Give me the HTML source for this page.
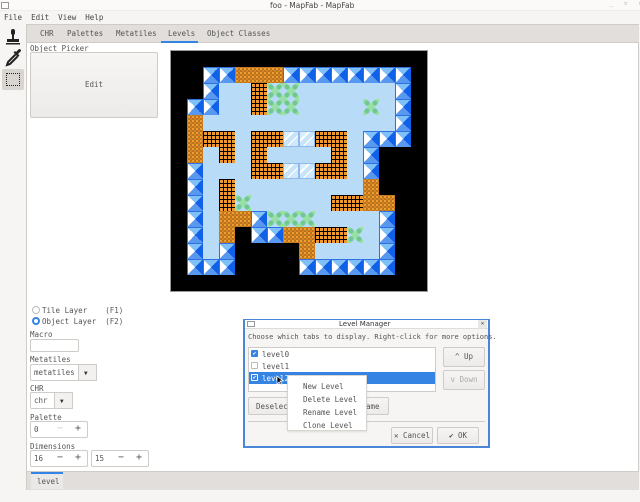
<!DOCTYPE html>
<html><head><meta charset="utf-8"><style>
*{box-sizing:border-box;margin:0;padding:0}
body{width:640px;height:502px;background:#f6f5f4;font-family:"DejaVu Sans Mono","Liberation Mono",monospace;font-size:7.5px;color:#555;position:relative;overflow:hidden}
.a{position:absolute}
.t{white-space:nowrap}
.map{left:171px;top:51px;width:256px;height:240px;background:#000;outline:1px solid #999}
.map div{position:absolute;width:16px;height:16px}
.B{background:conic-gradient(from -45deg,#80c0f8 0 25%,#1060e8 25% 50%,#5898f0 50% 75%,#fff 75%);box-shadow:inset 1px 1px 0 #3070e0}
.L{background:#b8dcf8}
.R{background:radial-gradient(circle,#f0a030 1.3px,transparent 1.8px) 0 0/4px 4px,radial-gradient(circle,#d88020 1.3px,transparent 1.8px) 2px 2px/4px 4px,#2a1400}
.W{background:linear-gradient(#000 1px,transparent 1px) 0 0/16px 4px,linear-gradient(90deg,#000 1px,transparent 1px) 0 0/8px 8px,linear-gradient(90deg,#000 1px,transparent 1px) 4px 4px/8px 8px,#f09830}
.G{background:radial-gradient(circle,#70c890 2px,transparent 3px) 0 0/8px 8px,linear-gradient(45deg,transparent 40%,#98e0a8 40% 60%,transparent 60%),linear-gradient(-45deg,#b8dcf8 40%,#98e0a8 40% 60%,#b8dcf8 60%)}
.S{background:linear-gradient(135deg,#d8eefc 30%,#fff 30% 38%,#c8e4fa 38% 58%,#fff 58% 64%,#d0e8fc 64%);box-shadow:inset 0 0 0 1px #90b8e8}
.btn{border:1px solid #cfcbc7;border-radius:2px;background:linear-gradient(#f6f5f4,#edebe9);text-align:center}
.inp{border:1px solid #cfcbc7;border-radius:2px;background:#fff}
</style></head><body>
<div class="a" style="left:0;top:0;width:640px;height:11px;background:#fbfaf9;border-bottom:1px solid #eee"></div>
<div class="a" style="left:1px;top:2px;width:8px;height:7px;border:1px solid #999;background:#fff"></div>
<div class="a t" style="left:270px;top:1px;font-family:'DejaVu Sans',sans-serif;font-size:7.5px;color:#444">foo - MapFab - MapFab</div>
<div class="a" style="left:606px;top:0;width:33px;height:10px;color:#aaa;font-size:6px">&nbsp;_&nbsp;&nbsp;&nbsp;▫&nbsp;&nbsp;&nbsp;✕</div>
<div class="a t" style="left:4px;top:13px;color:#444;font-size:7.5px">File&nbsp;&nbsp;Edit&nbsp;&nbsp;View&nbsp;&nbsp;Help</div>
<svg class="a" style="left:4px;top:28px" width="18" height="40" viewBox="0 0 18 40">
<rect x="7" y="1" width="4" height="6" rx="2" fill="#222"/><rect x="8" y="6" width="2" height="6" fill="#222"/><rect x="3" y="11" width="12" height="3" fill="#222"/><rect x="2" y="15" width="14" height="1.5" fill="#222"/>
<path d="M11.5 26.5 L4 34 L3 37 L6 36 L13.5 28.5" stroke="#222" stroke-width="2" fill="none"/>
<path d="M12 24 L15 21 Q17 21 17 23 L14 26 L15.5 27.5 L14 29 L9.5 24.5 L11 23z" fill="#222"/>
</svg>
<div class="a" style="left:2px;top:69px;width:22px;height:21px;background:#d8d4d0;border-radius:2px"></div>
<div class="a" style="left:6px;top:73px;width:14px;height:13px;border:1.5px dotted #222"></div>
<div class="a" style="left:26px;top:24px;width:613px;height:466px;background:#fff;border:1px solid #cfcbc7"></div>
<div class="a" style="left:27px;top:25px;width:612px;height:18px;background:#e1dedb;border-bottom:1px solid #cfcbc7"></div>
<div class="a t" style="left:40px;top:29px">CHR</div>
<div class="a t" style="left:67px;top:29px">Palettes</div>
<div class="a t" style="left:116px;top:29px">Metatiles</div>
<div class="a t" style="left:168px;top:29px">Levels</div>
<div class="a t" style="left:207px;top:29px">Object Classes</div>
<div class="a" style="left:161px;top:41px;width:37px;height:2px;background:#3584e4"></div>
<div class="a t" style="left:30px;top:44px">Object Picker</div>
<div class="a btn" style="left:30px;top:52px;width:128px;height:66px;line-height:64px">Edit</div>
<div class="a map" id="map"></div>
<div class="a" style="left:32px;top:306px;width:8px;height:8px;border:1px solid #bbb;border-radius:50%"></div>
<div class="a t" style="left:42px;top:306px">Tile Layer&nbsp;&nbsp;&nbsp;&nbsp;(F1)</div>
<div class="a" style="left:32px;top:317px;width:8px;height:8px;border:2.5px solid #3584e4;border-radius:50%"></div>
<div class="a t" style="left:42px;top:317px">Object Layer&nbsp;&nbsp;(F2)</div>
<div class="a t" style="left:30px;top:330px">Macro</div>
<div class="a inp" style="left:30px;top:339px;width:49px;height:13px"></div>
<div class="a t" style="left:30px;top:355px">Metatiles</div>
<div class="a inp" style="left:30px;top:364px;width:67px;height:17px"></div>
<div class="a" style="left:78px;top:364px;width:19px;height:17px;border:1px solid #cfcbc7;background:#f2f1f0"></div>
<div class="a t" style="left:34px;top:368px">metatiles</div><div class="a" style="left:84px;top:370px;font-size:6px;color:#333">▼</div>
<div class="a t" style="left:30px;top:384px">CHR</div>
<div class="a inp" style="left:30px;top:392px;width:43px;height:17px"></div>
<div class="a" style="left:54px;top:392px;width:19px;height:17px;border:1px solid #cfcbc7;background:#f2f1f0"></div>
<div class="a t" style="left:34px;top:396px">chr</div><div class="a" style="left:60px;top:398px;font-size:6px;color:#333">▼</div>
<div class="a t" style="left:30px;top:413px">Palette</div>
<div class="a inp" style="left:30px;top:421px;width:58px;height:17px"></div>
<div class="a t" style="left:34px;top:425px">0</div><div class="a t" style="left:57px;top:423px;font-size:10px;color:#ccc">−</div><div class="a t" style="left:75px;top:423px;font-size:10px;color:#555">+</div>
<div class="a t" style="left:30px;top:442px">Dimensions</div>
<div class="a inp" style="left:30px;top:450px;width:58px;height:17px"></div>
<div class="a t" style="left:34px;top:454px">16</div><div class="a t" style="left:57px;top:452px;font-size:10px">−</div><div class="a t" style="left:75px;top:452px;font-size:10px">+</div>
<div class="a inp" style="left:91px;top:450px;width:58px;height:17px"></div>
<div class="a t" style="left:95px;top:454px">15</div><div class="a t" style="left:118px;top:452px;font-size:10px">−</div><div class="a t" style="left:136px;top:452px;font-size:10px">+</div>
<div class="a" style="left:27px;top:471px;width:612px;height:19px;background:#e1dedb;border-top:1px solid #cfcbc7"></div>
<div class="a" style="left:31px;top:472px;width:32px;height:17px;background:#ebe9e7;border-top:2px solid #3584e4"></div>
<div class="a t" style="left:37px;top:477px">level</div>
<div class="a" style="left:243px;top:319px;width:247px;height:129px;background:#f6f5f4;border:2px solid #4a86d8"></div>
<div class="a" style="left:245px;top:320px;width:243px;height:9px;background:#fff;border-bottom:1px solid #ddd"></div>
<div class="a" style="left:247px;top:321px;width:8px;height:6px;border:1px solid #999"></div>
<div class="a t" style="left:339px;top:320px;font-family:'DejaVu Sans',sans-serif;font-size:7px;color:#333">Level Manager</div>
<div class="a" style="left:478px;top:320px;width:9px;height:8px;background:#e8e8e8;font-size:6px;text-align:center;color:#444">✕</div>
<div class="a t" style="left:248px;top:333px;font-size:7px">Choose which tabs to display. Right-click for more options.</div>
<div class="a" style="left:248px;top:347px;width:188px;height:45px;background:#fff;border:1px solid #cfcbc7"></div>
<div class="a" style="left:249px;top:372px;width:186px;height:12px;background:#3584e4"></div>
<div class="a" style="left:251px;top:350px;width:7px;height:7px;background:#3584e4;border-radius:1px;color:#fff;font-size:6px;line-height:7px;text-align:center">✔</div>
<div class="a t" style="left:262px;top:350px">level0</div>
<div class="a" style="left:251px;top:362px;width:7px;height:7px;border:1px solid #bbb;border-radius:1px"></div>
<div class="a t" style="left:262px;top:362px">level1</div>
<div class="a" style="left:251px;top:374px;width:7px;height:7px;background:#3584e4;border:1px solid #fff;border-radius:1px;color:#fff;font-size:6px;line-height:6px;text-align:center">✔</div>
<div class="a t" style="left:262px;top:374px;color:#fff">level2</div>
<div class="a btn t" style="left:443px;top:347px;width:42px;height:20px;line-height:18px">^ Up</div>
<div class="a btn t" style="left:443px;top:370px;width:42px;height:20px;line-height:18px;color:#aaa">v Down</div>
<div class="a btn" style="left:248px;top:397px;width:141px;height:18px"></div>
<div class="a t" style="left:256px;top:402px">Deselect</div>
<div class="a t" style="left:366px;top:402px">ame</div>
<div class="a" style="left:248px;top:421px;width:237px;height:1px;background:#cfcbc7"></div>
<div class="a btn t" style="left:391px;top:427px;width:42px;height:17px;line-height:15px">✕ Cancel</div>
<div class="a btn t" style="left:437px;top:427px;width:42px;height:17px;line-height:15px">✔ OK</div>
<div class="a" style="left:287px;top:375px;width:80px;height:56px;background:#fff;border:1px solid #d8d4d0;box-shadow:0 1px 2px rgba(0,0,0,.1)"></div>
<div class="a t" style="left:303px;top:380px;line-height:13px;color:#555">New Level<br>Delete Level<br>Rename Level<br>Clone Level</div>
<svg class="a" style="left:276px;top:375px" width="8" height="11"><path d="M1 1v8l2-2 2 3 1-1-2-3h3z" fill="#000" stroke="#fff" stroke-width=".7"/></svg>
<script>
var rows=["KKKKKKKKKKKKKKKK","KKBBRRRBBBBBBBBK","KKBLLWGGLLLLLLBK","KBBLLWGGLLLLGLBK","KRLLLLLLLLLLLLBK","KRWWLWWSSWWLBBBK","KRLWLWLLLLWLBKKK","KBLLLWWSSWWLBKKK","KBLWLLLLLLLLRKKK","KBLWGLLLLLWWRRKK","KBLRRBGGGLLLLBKK","KBLRKBBRRWWGLBKK","KBLBKKKKRLLLLBKK","KBBBKKKKBBBBBBKK","KKKKKKKKKKKKKKKK"];
var m=document.getElementById('map'),h='';
rows.forEach(function(r,y){for(var x=0;x<16;x++){var c=r[x];if(c!='K')h+='<div class="'+c+'" style="left:'+x*16+'px;top:'+y*16+'px"></div>';}});
m.innerHTML=h;
</script>
</body></html>
